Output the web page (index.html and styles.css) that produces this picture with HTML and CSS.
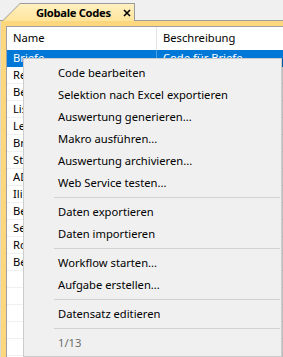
FILE: index.html
```html
<!DOCTYPE html>
<html lang="de">
<head>
    <meta charset="UTF-8">
    <title>Globale Codes</title>
    <link rel="stylesheet" href="styles.css">
</head>
<body>

    <div class="window">
        <!-- Tab strip -->
        <div class="tabstrip">
            <div class="tab">
                <div class="tab-face">
                    <span class="tab-title">Globale Codes</span>
                    <svg class="tab-close" width="8" height="8" viewBox="0 0 8 8">
                        <path d="M1 1 L7 7 M7 1 L1 7" stroke="#000" stroke-width="1.6" fill="none"/>
                    </svg>
                </div>
            </div>
        </div>

        <!-- Grid inside the yellow frame -->
        <div class="frame">
            <div class="grid">
                <div class="grid-row grid-head">
                    <div class="cell cell-name">Name</div>
                    <div class="cell cell-desc">Beschreibung</div>
                </div>
                <div class="grid-row selected">
                    <div class="cell cell-name">Briefe</div>
                    <div class="cell cell-desc">Code für Briefe</div>
                </div>
                <div class="grid-row"><div class="cell cell-name">Re</div><div class="cell cell-desc"></div></div>
                <div class="grid-row"><div class="cell cell-name">Be</div><div class="cell cell-desc"></div></div>
                <div class="grid-row"><div class="cell cell-name">Lis</div><div class="cell cell-desc"></div></div>
                <div class="grid-row"><div class="cell cell-name">Le</div><div class="cell cell-desc"></div></div>
                <div class="grid-row"><div class="cell cell-name">Br</div><div class="cell cell-desc"></div></div>
                <div class="grid-row"><div class="cell cell-name">St</div><div class="cell cell-desc"></div></div>
                <div class="grid-row"><div class="cell cell-name">AD</div><div class="cell cell-desc"></div></div>
                <div class="grid-row"><div class="cell cell-name">Ili</div><div class="cell cell-desc"></div></div>
                <div class="grid-row"><div class="cell cell-name">Be</div><div class="cell cell-desc"></div></div>
                <div class="grid-row"><div class="cell cell-name">Se</div><div class="cell cell-desc"></div></div>
                <div class="grid-row"><div class="cell cell-name">Ro</div><div class="cell cell-desc"></div></div>
                <div class="grid-row"><div class="cell cell-name">Be</div><div class="cell cell-desc"></div></div>
                <div class="grid-row"><div class="cell cell-name"></div><div class="cell cell-desc"></div></div>
                <div class="grid-row"><div class="cell cell-name"></div><div class="cell cell-desc"></div></div>
                <div class="grid-row"><div class="cell cell-name"></div><div class="cell cell-desc"></div></div>
                <div class="grid-row"><div class="cell cell-name"></div><div class="cell cell-desc"></div></div>
                <div class="grid-row"><div class="cell cell-name"></div><div class="cell cell-desc"></div></div>
            </div>
        </div>

        <!-- Context menu over the grid -->
        <div class="context-menu">
            <div class="menu-item">Code bearbeiten</div>
            <div class="menu-item">Selektion nach Excel exportieren</div>
            <div class="menu-item">Auswertung generieren...</div>
            <div class="menu-item">Makro ausführen...</div>
            <div class="menu-item">Auswertung archivieren...</div>
            <div class="menu-item">Web Service testen...</div>
            <div class="menu-sep"></div>
            <div class="menu-item">Daten exportieren</div>
            <div class="menu-item">Daten importieren</div>
            <div class="menu-sep"></div>
            <div class="menu-item">Workflow starten...</div>
            <div class="menu-item">Aufgabe erstellen...</div>
            <div class="menu-sep"></div>
            <div class="menu-item">Datensatz editieren</div>
            <div class="menu-sep"></div>
            <div class="menu-item disabled">1/13</div>
        </div>
    </div>

</body>
</html>
```

FILE: styles.css
```css
body {
    margin: 0;
    font-family: "Noto Sans", "Open Sans", sans-serif;
    font-size: 11.2px;
    color: #000;
    background-color: #f0f0f0;
    overflow: hidden;
}

.window {
    position: relative;
    width: 283px;
    height: 357px;
    overflow: hidden;
}

/* Tab strip */
.tabstrip {
    display: flex;
    align-items: flex-end;
    height: 20px;
    border-bottom: 1px solid #a0a0a0;
    padding-left: 2px;
}

.tab {
    position: relative;
    width: 133px;
    height: 18px;
    margin-bottom: -1px;
    padding: 1px 1px 0 1px;
    box-sizing: border-box;
    background-color: #9a9a9a;
    clip-path: polygon(18px 0, 100% 0, 100% 100%, 0 100%);
}

.tab-face {
    display: flex;
    align-items: center;
    height: 100%;
    padding-left: 33px;
    background: linear-gradient(#fff0c2, #ffe49a);
    clip-path: polygon(17px 0, 100% 0, 100% 100%, 0 100%);
}

.tab-title {
    font-weight: bold;
    letter-spacing: -0.3px;
    width: 87px;
}

.tab-close {
    display: block;
}

/* Yellow frame around the grid */
.frame {
    height: 336px;
    padding: 5px 0 0 5px;
    border-left: 1px solid #d8d8d8;
    background-color: #fdd77e;
}

.grid {
    height: 100%;
    background-color: #fff;
    border-top: 1px solid #a0a0a0;
    border-left: 1px solid #a0a0a0;
}

.grid-row {
    display: flex;
    height: 16px;
    border-bottom: 1px solid #f0f0f0;
    line-height: 16px;
}

.grid-head {
    height: 23px;
    line-height: 22px;
    border-bottom: none;
}

.cell {
    padding-left: 6px;
    white-space: nowrap;
    overflow: hidden;
}

.cell-name {
    width: 143px;
    border-right: 1px solid #e5e5e5;
}

.cell-desc {
    flex: 1;
}

.selected {
    background-color: #0078d7;
    color: #fff;
    border-bottom-color: #0078d7;
}

.selected .cell-name {
    border-right-color: #4aa0e4;
}

/* Context menu */
.context-menu {
    position: absolute;
    left: 23px;
    top: 58px;
    width: 257px;
    padding: 3px 0 2px 0;
    background-color: #f0f0f0;
    border: 1px solid #cccccc;
    box-shadow: 1px 1px 1px rgba(0, 0, 0, 0.25);
}

.menu-item {
    height: 22px;
    line-height: 22px;
    padding-left: 34px;
    white-space: nowrap;
}

.menu-item.disabled {
    color: #6d6d6d;
}

.menu-sep {
    height: 1px;
    margin: 3px 1px 3px 30px;
    background-color: #d2d2d2;
}
```
